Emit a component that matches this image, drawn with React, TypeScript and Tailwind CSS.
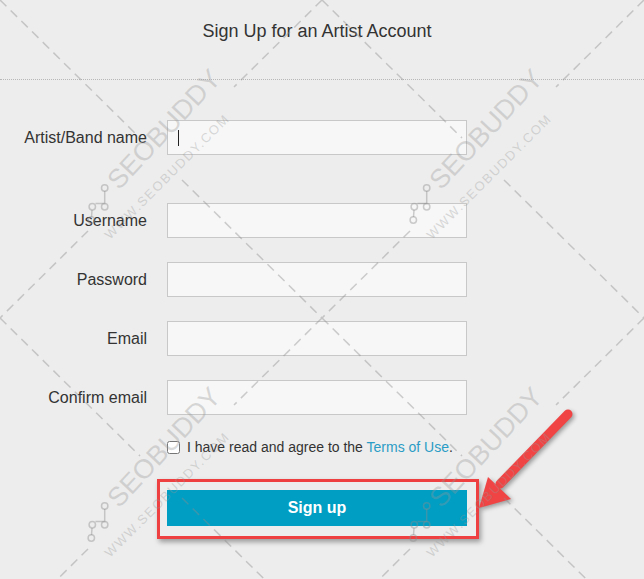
import React from "react";

const fields = [
  { label: "Artist/Band name", gap: "mt-0", caret: true },
  { label: "Username", gap: "mt-[48px]" },
  { label: "Password", gap: "mt-[24px]" },
  { label: "Email", gap: "mt-[24px]" },
  { label: "Confirm email", gap: "mt-[24px]" },
];

function WatermarkTile() {
  const line = "rgba(140,140,140,0.42)";
  const ink = "rgba(150,150,150,0.34)";
  return (
    <svg width="322" height="318" viewBox="0 0 322 318" className="block">
      <g stroke={line} strokeWidth="1.5" strokeDasharray="9 6" fill="none">
        <line x1="0" y1="0" x2="140" y2="138" />
        <line x1="182" y1="180" x2="322" y2="318" />
        <line x1="322" y1="0" x2="234" y2="87" />
        <line x1="88" y1="231" x2="0" y2="318" />
      </g>
      <text
        x="119"
        y="191"
        transform="rotate(-47 119 191)"
        fill={ink}
        fontFamily="'Liberation Sans', Arial, sans-serif"
        fontSize="27"
      >
        SEOBUDDY
      </text>
      <text
        x="110"
        y="240"
        transform="rotate(-45 110 240)"
        fill={ink}
        fontFamily="'Liberation Sans', Arial, sans-serif"
        fontSize="13"
        letterSpacing="1.6"
      >
        WWW.SEOBUDDY.COM
      </text>
      <g stroke={line} strokeWidth="1.5" fill="none">
        <path d="M104.7 191 V203.5 H95.5 M92 210 L91.5 217" />
        <circle cx="104.7" cy="188" r="3.2" />
        <circle cx="104.7" cy="206.7" r="3.2" />
        <circle cx="92.3" cy="206.7" r="3.2" />
        <circle cx="91.3" cy="220" r="3.2" />
      </g>
    </svg>
  );
}

export default function App() {
  return (
    <div className="relative w-[644px] h-[579px] overflow-hidden bg-[#ededed] text-[#333] font-['Liberation_Sans',Arial,sans-serif]">
      <header className="h-[80px] border-b border-dotted border-[#b8b8b8] pt-[19px] pr-[10px] text-center text-[18px] leading-[24px]">
        Sign Up for an Artist Account
      </header>

      <form className="flex flex-col pt-[40px]" onSubmit={e => e.preventDefault()}>
        {fields.map(f => (
          <div key={f.label} className={`flex items-center h-[35px] ${f.gap}`}>
            <label className="w-[147px] text-right text-[16px] leading-[20px]">{f.label}</label>
            <div className="relative ml-[20px] w-[300px] h-[35px]">
              <input
                type="text"
                className="w-full h-full bg-[#f7f7f7] border border-[#c8c8c8] outline-none px-[10px] text-[14px]"
              />
              {f.caret && <span className="absolute left-[11px] top-[10px] w-px h-[16px] bg-[#222]" />}
            </div>
          </div>
        ))}

        <div className="flex items-center h-[20px] mt-[22px] pl-[167px] gap-[7px] text-[14px] leading-[20px]">
          <input type="checkbox" className="m-0 w-[13px] h-[13px]" />
          <span>
            I have read and agree to the <a className="text-[#2a9cc5]">Terms of Use</a>.
          </span>
        </div>

        <button
          type="submit"
          className="mt-[33px] ml-[167px] w-[300px] h-[36px] bg-[#009ec3] text-white text-[16px] font-bold"
        >
          Sign up
        </button>
      </form>

      {/* annotation */}
      <div className="absolute left-[157px] top-[479px] w-[322px] h-[60px] border-[3px] border-[#ee4040] shadow-[2px_3px_5px_rgba(0,0,0,0.35)] pointer-events-none" />
      <svg
        width="644"
        height="579"
        className="absolute inset-0 pointer-events-none drop-shadow-[2px_2px_2px_rgba(0,0,0,0.35)]"
      >
        <line x1="568" y1="414" x2="500" y2="484" stroke="#f04444" strokeWidth="9" strokeLinecap="round" />
        <polygon points="479,508 488,477 511,499" fill="#f04444" />
      </svg>

      {/* watermark */}
      <div className="absolute inset-0 grid grid-cols-[322px_322px] grid-rows-[318px_318px] pointer-events-none">
        <WatermarkTile />
        <WatermarkTile />
        <WatermarkTile />
        <WatermarkTile />
      </div>
    </div>
  );
}
